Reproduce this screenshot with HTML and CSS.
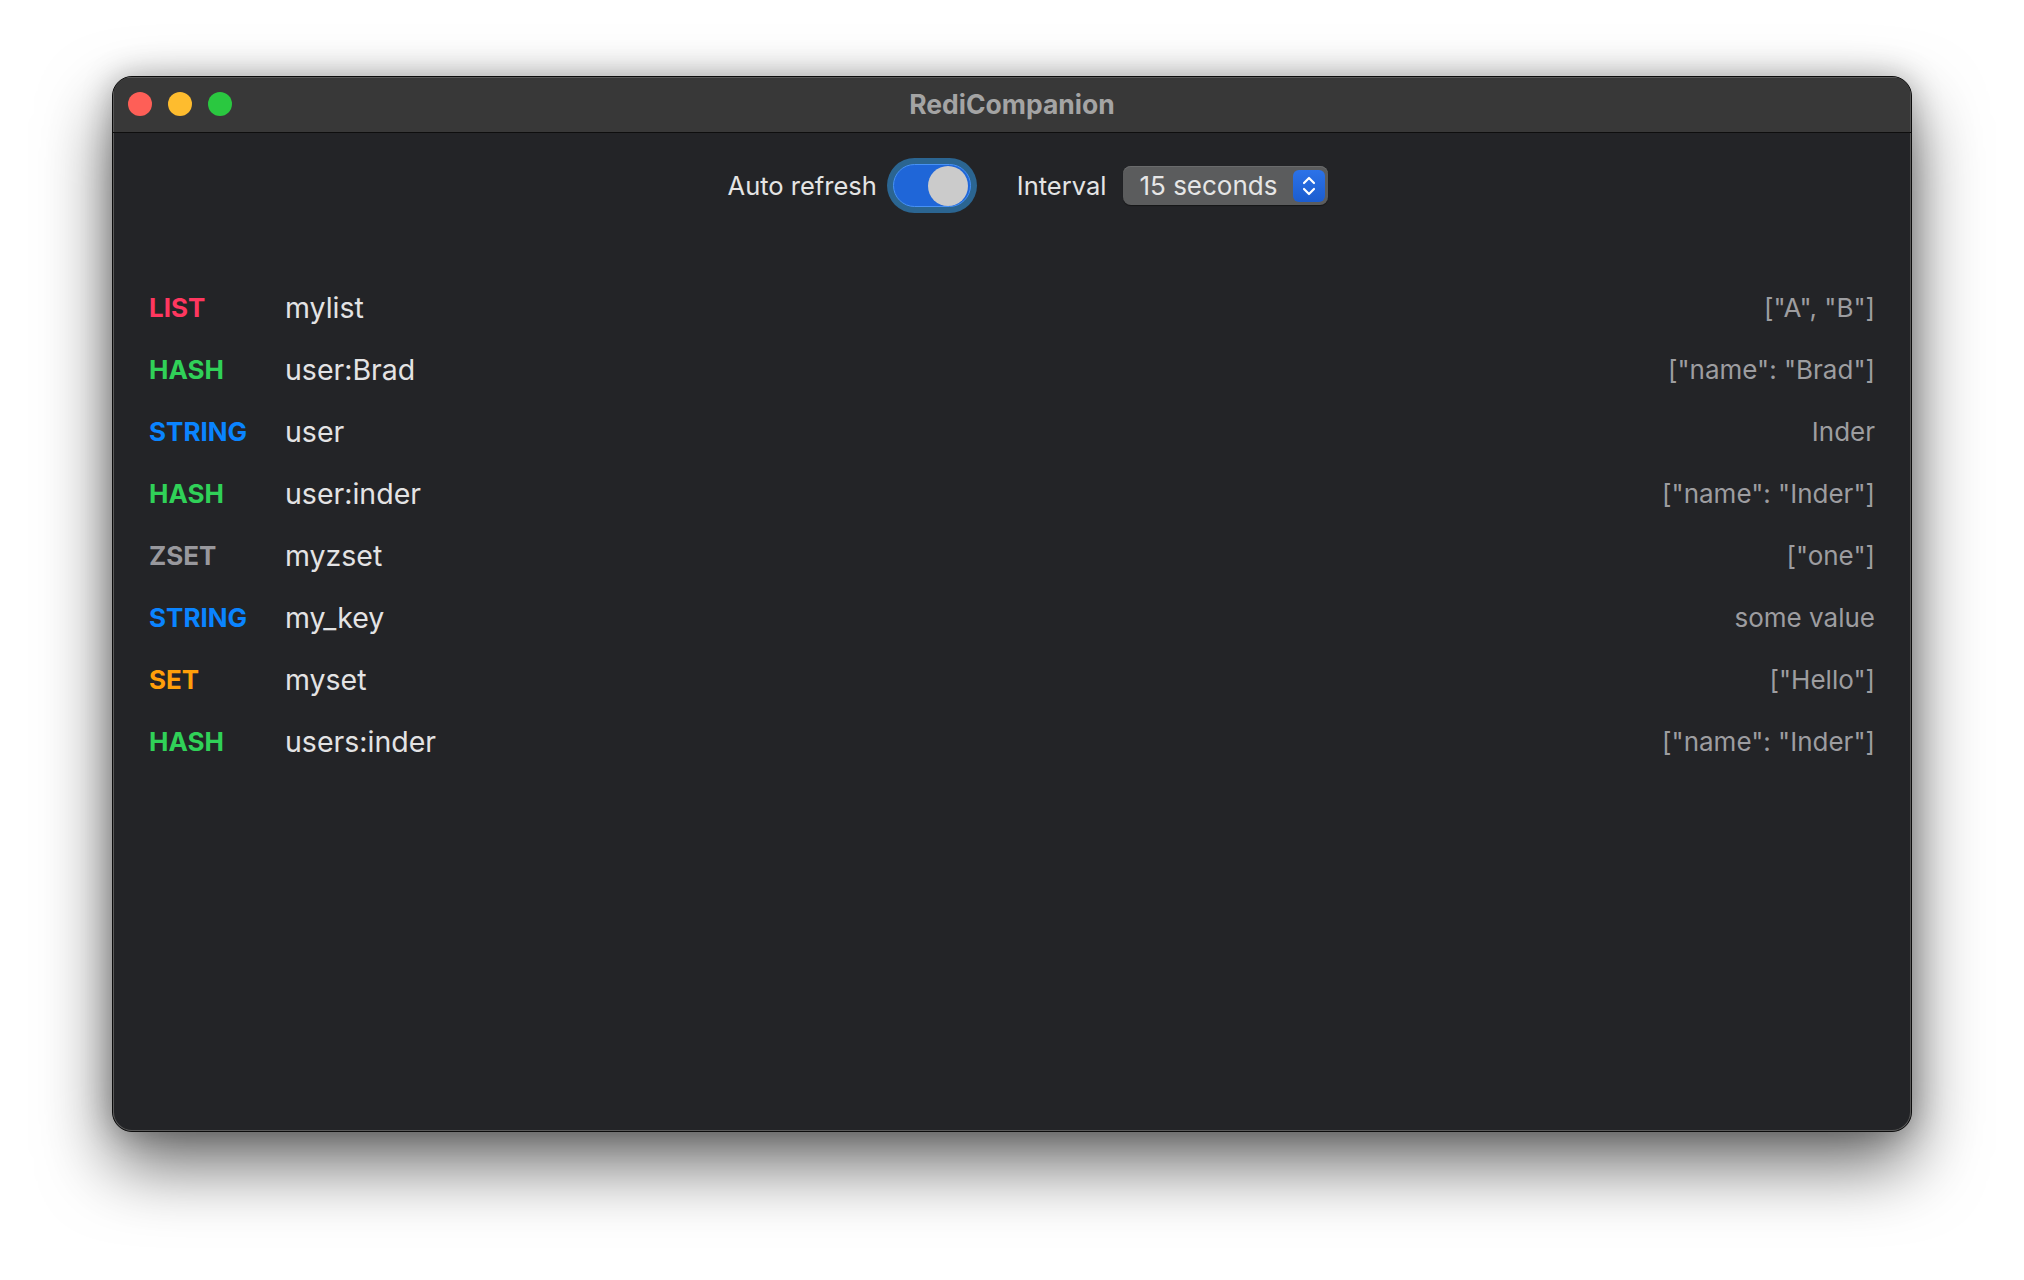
FILE: index.html
```html
<!doctype html>
<html lang="en">
  <head>
    <meta charset="UTF-8" />
    <meta name="viewport" content="width=device-width, initial-scale=1.0" />
    <title>RediCompanion</title>
    <link rel="stylesheet" href="styles.css">
  </head>
  <body>
    <div class="window">
      <div class="titlebar">
        <div class="lights">
          <span class="light red"></span>
          <span class="light yellow"></span>
          <span class="light green"></span>
        </div>
        <div class="title">RediCompanion</div>
      </div>

      <div class="content">
        <div class="toolbar">
          <span class="label">Auto refresh</span>
          <span class="switch"><span class="knob"></span></span>
          <span class="label interval">Interval</span>
          <span class="popup">
            <span class="popup-text">15 seconds</span>
            <span class="stepper">
              <svg width="16" height="22" viewBox="0 0 16 22">
                <path d="M3 8 L8 3 L13 8" fill="none" stroke="#fff" stroke-width="2.2" stroke-linecap="round" stroke-linejoin="round"/>
                <path d="M3 14 L8 19 L13 14" fill="none" stroke="#fff" stroke-width="2.2" stroke-linecap="round" stroke-linejoin="round"/>
              </svg>
            </span>
          </span>
        </div>

        <div class="keys">
          <div class="row"><span class="type list">LIST</span><span class="key">mylist</span><span class="value">["A", "B"]</span></div>
          <div class="row"><span class="type hash">HASH</span><span class="key">user:Brad</span><span class="value">["name": "Brad"]</span></div>
          <div class="row"><span class="type string">STRING</span><span class="key">user</span><span class="value">Inder</span></div>
          <div class="row"><span class="type hash">HASH</span><span class="key">user:inder</span><span class="value">["name": "Inder"]</span></div>
          <div class="row"><span class="type zset">ZSET</span><span class="key">myzset</span><span class="value">["one"]</span></div>
          <div class="row"><span class="type string">STRING</span><span class="key">my_key</span><span class="value">some value</span></div>
          <div class="row"><span class="type set">SET</span><span class="key">myset</span><span class="value">["Hello"]</span></div>
          <div class="row"><span class="type hash">HASH</span><span class="key">users:inder</span><span class="value">["name": "Inder"]</span></div>
        </div>
      </div>
    </div>
  </body>
</html>
```

FILE: styles.css
```css
body {
  margin: 0;
  padding: 76px 112px 0;
  height: 1280px;
  box-sizing: border-box;
  background-color: #ffffff;
  font-family: Inter, "Noto Sans", sans-serif;
  overflow: hidden;
}

.window {
  width: 1800px;
  height: 1056px;
  box-sizing: border-box;
  background-color: #232427;
  border: 1px solid #0c0c0c;
  border-radius: 20px;
  box-shadow: inset 0 0 0 1px #5a5a5a, 0 32px 70px rgba(0, 0, 0, 0.6), 0 0 30px rgba(0, 0, 0, 0.25);
  overflow: hidden;
  display: flex;
  flex-direction: column;
}

.titlebar {
  height: 55px;
  flex-shrink: 0;
  background-color: #383838;
  border-bottom: 1px solid #0e0e0e;
  box-shadow: inset 1px 1px 0 #5a5a5a, inset -1px 0 0 #5a5a5a;
  display: flex;
  align-items: center;
  position: relative;
}

.lights {
  display: flex;
  gap: 16px;
  padding-left: 15px;
  padding-bottom: 1px;
}

.light {
  width: 24px;
  height: 24px;
  border-radius: 50%;
}

.red { background-color: #fe5f57; }
.yellow { background-color: #febc2e; }
.green { background-color: #2ac840; }

.title {
  position: absolute;
  left: 0;
  right: 0;
  top: 0;
  bottom: 0;
  display: flex;
  justify-content: center;
  align-items: center;
  font-size: 26.5px;
  font-weight: 700;
  color: #a4a4a4;
  padding-bottom: 2px;
}

.content {
  flex: 1;
  box-shadow: inset 1px 0 0 #5a5a5a, inset -1px -1px 0 #5a5a5a;
}

.toolbar {
  display: flex;
  justify-content: center;
  align-items: center;
  height: 55px;
  margin-top: 25px;
  padding-left: 32px;
}

.label {
  font-size: 25.5px;
  color: #e4e4e4;
}

.switch {
  width: 78px;
  height: 43px;
  box-sizing: border-box;
  margin-left: 16px;
  border-radius: 22px;
  background-color: #1f66d8;
  border: 1px solid #4791f5;
  box-shadow: 0 0 0 6px #2b6591;
  display: flex;
  justify-content: flex-end;
  align-items: center;
  padding-right: 2px;
}

.knob {
  width: 40px;
  height: 40px;
  border-radius: 50%;
  background-color: #cbcbcb;
}

.interval {
  margin-left: 46px;
}

.popup {
  width: 205px;
  height: 39px;
  box-sizing: border-box;
  margin-left: 17px;
  border-radius: 8px;
  background-color: #5b5c5d;
  box-shadow: inset 0 1px 0 #6a6b6c, 0 1px 1px rgba(0, 0, 0, 0.4);
  display: flex;
  align-items: center;
  justify-content: space-between;
  padding: 0 3px 0 16px;
}

.popup-text {
  font-size: 26px;
  color: #e6e6e6;
}

.stepper {
  width: 32px;
  height: 32px;
  border-radius: 6px;
  background: linear-gradient(#2c72e8, #1c5dcf);
  display: flex;
  justify-content: center;
  align-items: center;
}

.keys {
  margin-top: 63px;
  padding: 0 36px 0 36px;
}

.row {
  display: flex;
  align-items: center;
  height: 62px;
}

.type {
  width: 136px;
  flex-shrink: 0;
  font-size: 26px;
  font-weight: 700;
}

.list { color: #ff375f; }
.hash { color: #30d158; }
.string { color: #0a84ff; }
.zset { color: #98989d; }
.set { color: #ff9f0a; }

.key {
  flex: 1;
  font-size: 28.5px;
  color: #e3e3e4;
}

.value {
  font-size: 26px;
  color: #9d9da0;
}
```
